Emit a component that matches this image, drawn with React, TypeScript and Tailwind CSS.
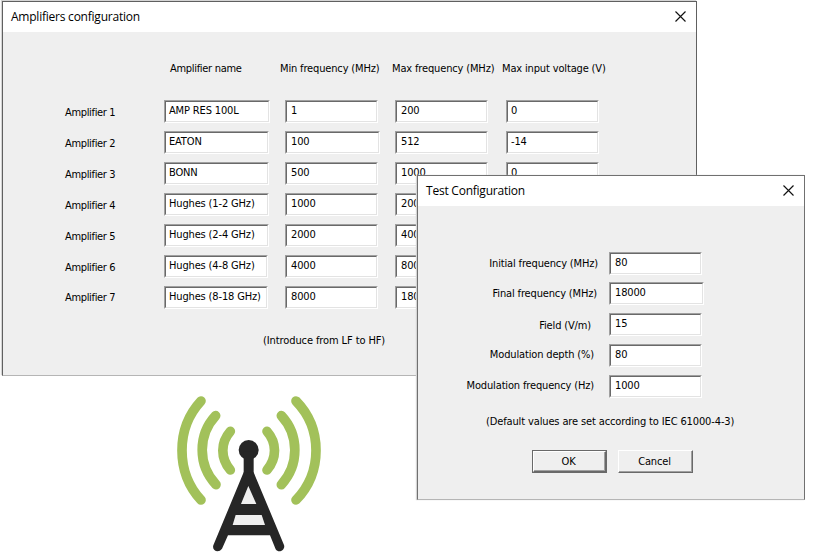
import React from "react";

type FieldProps = { value: string; width: string; pad?: string };

function Field({ value, width, pad = "pl-[3px]" }: FieldProps) {
  return (
    <div className={`h-[23px] ${width} border border-t-[#a0a0a0] border-l-[#a0a0a0] border-r-white border-b-white`}>
      <div className={`flex h-full items-start overflow-hidden border border-t-[#696969] border-l-[#696969] border-r-[#e3e3e3] border-b-[#e3e3e3] bg-white ${pad} pt-px leading-[15px] whitespace-nowrap`}>
        {value}
      </div>
    </div>
  );
}

function TitleBar({ title }: { title: string }) {
  return (
    <div className="flex h-[30px] items-center justify-between bg-white pr-[10px] pl-[8px] font-['Open_Sans','Noto_Sans',sans-serif] text-[12px] tracking-[-0.23px] text-black">
      <span>{title}</span>
      <svg className="mb-[2px] h-[11px] w-[11px]" viewBox="0 0 11 11" stroke="#111" strokeWidth="1.15" fill="none">
        <path d="M.5 .5 10.5 10.5M10.5 .5 .5 10.5" />
      </svg>
    </div>
  );
}

const amplifiers = [
  { name: "AMP RES 100L", nameW: "w-[106px]", min: "1", minW: "w-[93px]", max: "200", volt: "0" },
  { name: "EATON", nameW: "w-[105px]", min: "100", minW: "w-[95px]", max: "512", volt: "-14" },
  { name: "BONN", nameW: "w-[105px]", min: "500", minW: "w-[93px]", max: "1000", volt: "0" },
  { name: "Hughes (1-2 GHz)", nameW: "w-[105px]", min: "1000", minW: "w-[93px]", max: "200", volt: "" },
  { name: "Hughes (2-4 GHz)", nameW: "w-[105px]", min: "2000", minW: "w-[93px]", max: "400", volt: "" },
  { name: "Hughes (4-8 GHz)", nameW: "w-[104px]", min: "4000", minW: "w-[93px]", max: "800", volt: "" },
  { name: "Hughes (8-18 GHz)", nameW: "w-[104px]", min: "8000", minW: "w-[93px]", max: "180", volt: "" },
];

const settings = [
  { label: "Initial frequency (MHz)", value: "80", width: "w-[93px]", row: "mb-[7px]", gap: "pr-[11px]", shift: "pt-[4px]" },
  { label: "Final frequency (MHz)", value: "18000", width: "w-[95px]", row: "mb-[8px]", gap: "pr-[12px]", shift: "pt-[4px]" },
  { label: "Field (V/m)", value: "15", width: "w-[93px]", row: "mb-[8px]", gap: "pr-[18px]", shift: "pt-[5px]" },
  { label: "Modulation depth (%)", value: "80", width: "w-[93px]", row: "mb-[8px]", gap: "pr-[15px]", shift: "pt-[3px]" },
  { label: "Modulation frequency (Hz)", value: "1000", width: "w-[93px]", row: "", gap: "pr-[15px]", shift: "pt-[3px]" },
];

function AmplifiersWindow() {
  return (
    <section className="absolute top-px left-[2px] h-[375px] w-[695px] border border-[#606060] border-b-[#b5b5b5] bg-[#efefef] shadow-[-1px_-1px_1px_#d4d4d4]">
      <TitleBar title="Amplifiers configuration" />
      <div className="flex pt-[29px] pl-[167px] leading-[16px] whitespace-nowrap">
        <span className="w-[110px] tracking-[-0.3px]">Amplifier name</span>
        <span className="w-[112px]">Min frequency (MHz)</span>
        <span className="w-[110px]">Max frequency (MHz)</span>
        <span>Max input voltage (V)</span>
      </div>
      <div className="flex flex-col gap-[8px] pt-[23px] pl-[62px]">
        {amplifiers.map((a, i) => (
          <div key={a.name} className="grid h-[23px] grid-cols-[99px_121px_110px_111px_93px]">
            <span className={`leading-[16px] tracking-[-0.34px] ${i === 6 ? "pt-[4px]" : "pt-[5px]"}`}>Amplifier {i + 1}</span>
            <Field value={a.name} width={a.nameW} />
            <Field value={a.min} width={a.minW} pad="pl-[4px]" />
            <Field value={a.max} width="w-[93px]" pad="pl-[4px]" />
            <Field value={a.volt} width="w-[93px]" />
          </div>
        ))}
      </div>
      <p className="pt-[24px] pl-[260px] leading-[16px] tracking-[-0.1px]">(Introduce from LF to HF)</p>
    </section>
  );
}

function TestWindow() {
  return (
    <section className="absolute top-[175px] left-[417px] h-[325px] w-[388px] border border-[#707070] border-b-[#b5b5b5] bg-[#efefef] shadow-[-1px_0_1px_#d4d4d4]">
      <TitleBar title="Test Configuration" />
      <div className="flex flex-col pt-[46px]">
        {settings.map((s) => (
          <div key={s.label} className={`flex h-[23px] ${s.row}`}>
            <span className={`w-[191px] text-right leading-[16px] whitespace-nowrap ${s.gap} ${s.shift}`}>{s.label}</span>
            <Field value={s.value} width={s.width} pad="pl-[4px]" />
          </div>
        ))}
      </div>
      <p className="pt-[16px] pl-[68px] leading-[16px] tracking-[-0.13px] whitespace-nowrap">(Default values are set according to IEC 61000-4-3)</p>
      <div className="flex gap-[11px] pt-[20px] pl-[114px]">
        <button className="h-[23px] w-[75px] border border-[#696969]">
          <span className="flex h-full items-center justify-center border border-t-white border-l-white border-r-[#696969] border-b-[#696969] pt-px pr-[2px] shadow-[inset_-1px_-1px_#a0a0a0]">OK</span>
        </button>
        <button className="h-[23px] w-[75px] border border-t-white border-l-white border-r-[#696969] border-b-[#696969] pt-px pr-[2px] shadow-[inset_-1px_-1px_#a0a0a0]">Cancel</button>
      </div>
    </section>
  );
}

function Antenna() {
  return (
    <svg className="absolute top-[385px] left-[165px] h-[175px] w-[170px]" viewBox="0 0 510 525" fill="none" strokeLinecap="round" strokeLinejoin="round">
      <g stroke="#a2c15a" strokeWidth="29">
        <path d="M108 48C32 130 32 262 108 345M152 92C98 150 98 240 153 299M196 139C166 173 166 219 196 255" />
        <path d="M393 48C473 130 473 262 393 345M349 92C403 150 403 240 349 299M306 139C336 173 336 219 306 255" />
      </g>
      <path d="M250 303 228 357H274ZM212 390 203 420H300L290 390Z" fill="#efefef" />
      <circle cx="251" cy="195" r="30" fill="#262626" />
      <path d="M251 200V265" stroke="#262626" strokeWidth="30" strokeLinecap="butt" />
      <path fillRule="evenodd" fill="#262626" d="M236 262H266L357 480C362 494 342 507 332 493L315 451H189L171 491C160 506 140 496 145 481ZM250 303 228 357H274ZM212 390 203 420H300L290 390Z" />
    </svg>
  );
}

export default function App() {
  return (
    <main className="relative h-[560px] w-[816px] overflow-hidden bg-white font-['DejaVu_Sans_Condensed','DejaVu_Sans',sans-serif] text-[11px] tracking-[-0.15px] text-black">
      <AmplifiersWindow />
      <Antenna />
      <TestWindow />
    </main>
  );
}
